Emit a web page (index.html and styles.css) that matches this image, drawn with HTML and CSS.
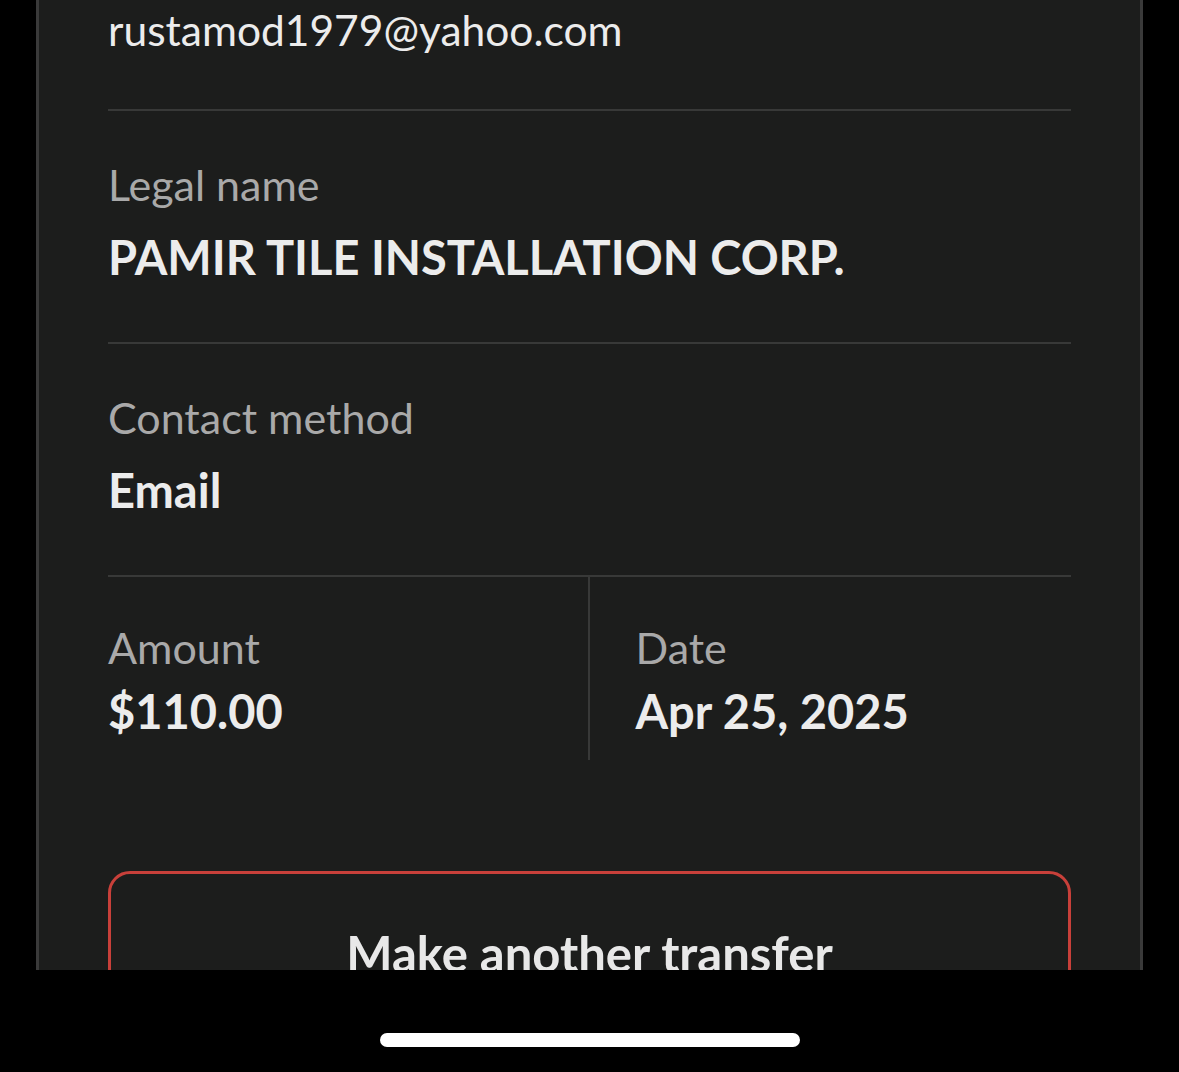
FILE: index.html
```html
<!DOCTYPE html>
<html lang="en">
<head>
<meta charset="utf-8">
<title>Transfer details</title>
<link rel="stylesheet" href="styles.css">
</head>
<body>
<div class="screen">
  <main class="panel">
    <section class="row row-first">
      <div class="value value-light">rustamod1979@yahoo.com</div>
    </section>
    <section class="row">
      <div class="label">Legal name</div>
      <div class="value">PAMIR TILE INSTALLATION CORP.</div>
    </section>
    <section class="row">
      <div class="label">Contact method</div>
      <div class="value">Email</div>
    </section>
    <section class="split">
      <div class="cell cell-left">
        <div class="label">Amount</div>
        <div class="value">$110.00</div>
      </div>
      <div class="cell cell-right">
        <div class="label">Date</div>
        <div class="value">Apr 25, 2025</div>
      </div>
    </section>
    <div class="actions">
      <button class="btn-outline">Make another transfer</button>
    </div>
  </main>
  <div class="home-area">
    <div class="home-indicator"></div>
  </div>
</div>
</body>
</html>
```

FILE: styles.css
```css
html, body {
  margin: 0;
  padding: 0;
  background: #000;
}
body {
  font-family: Lato, "Liberation Sans", sans-serif;
  color: #ececec;
}
.screen {
  width: 1179px;
  height: 1072px;
  display: flex;
  flex-direction: column;
  overflow: hidden;
}
.panel {
  box-sizing: border-box;
  margin-left: 36px;
  width: 1107px;
  height: 970px;
  flex: none;
  background: #1c1d1c;
  border-left: 3px solid #3a3a3a;
  border-right: 3px solid #3a3a3a;
  padding: 0 69px 0 69px;
  overflow: hidden;
}
.row {
  border-bottom: 2px solid #383938;
  padding: 47px 0 55px;
}
.row-first {
  padding: 0 0 49px;
}
.label {
  font-size: 43px;
  line-height: 54px;
  color: #a9a9a9;
}
.value {
  font-size: 47px;
  line-height: 60px;
  font-weight: 700;
  color: #ececec;
  margin-top: 15px;
}
.value-light {
  font-size: 42.5px;
  font-weight: 400;
  margin-top: 0;
}
.split {
  display: grid;
  grid-template-columns: 1fr 1fr;
  height: 183px;
}
.cell {
  box-sizing: border-box;
  min-width: 0;
  padding-top: 44px;
}
.cell .value {
  margin-top: 6px;
}
.cell-left {
  border-right: 2px solid #383938;
}
.cell-right {
  padding-left: 46px;
}
.actions {
  margin-top: 111px;
}
.btn-outline {
  box-sizing: border-box;
  width: 100%;
  height: 150px;
  border: 3px solid #c8403a;
  border-radius: 22px;
  background: transparent;
  color: #e8e8e8;
  font-family: inherit;
  font-size: 49px;
  font-weight: 700;
  padding: 50px 0 0;
  display: flex;
  justify-content: center;
  align-items: flex-start;
}
.home-area {
  flex: 1;
  display: flex;
  justify-content: center;
  padding-top: 63px;
}
.home-indicator {
  width: 420px;
  height: 14px;
  border-radius: 7px;
  background: #fff;
}
```
